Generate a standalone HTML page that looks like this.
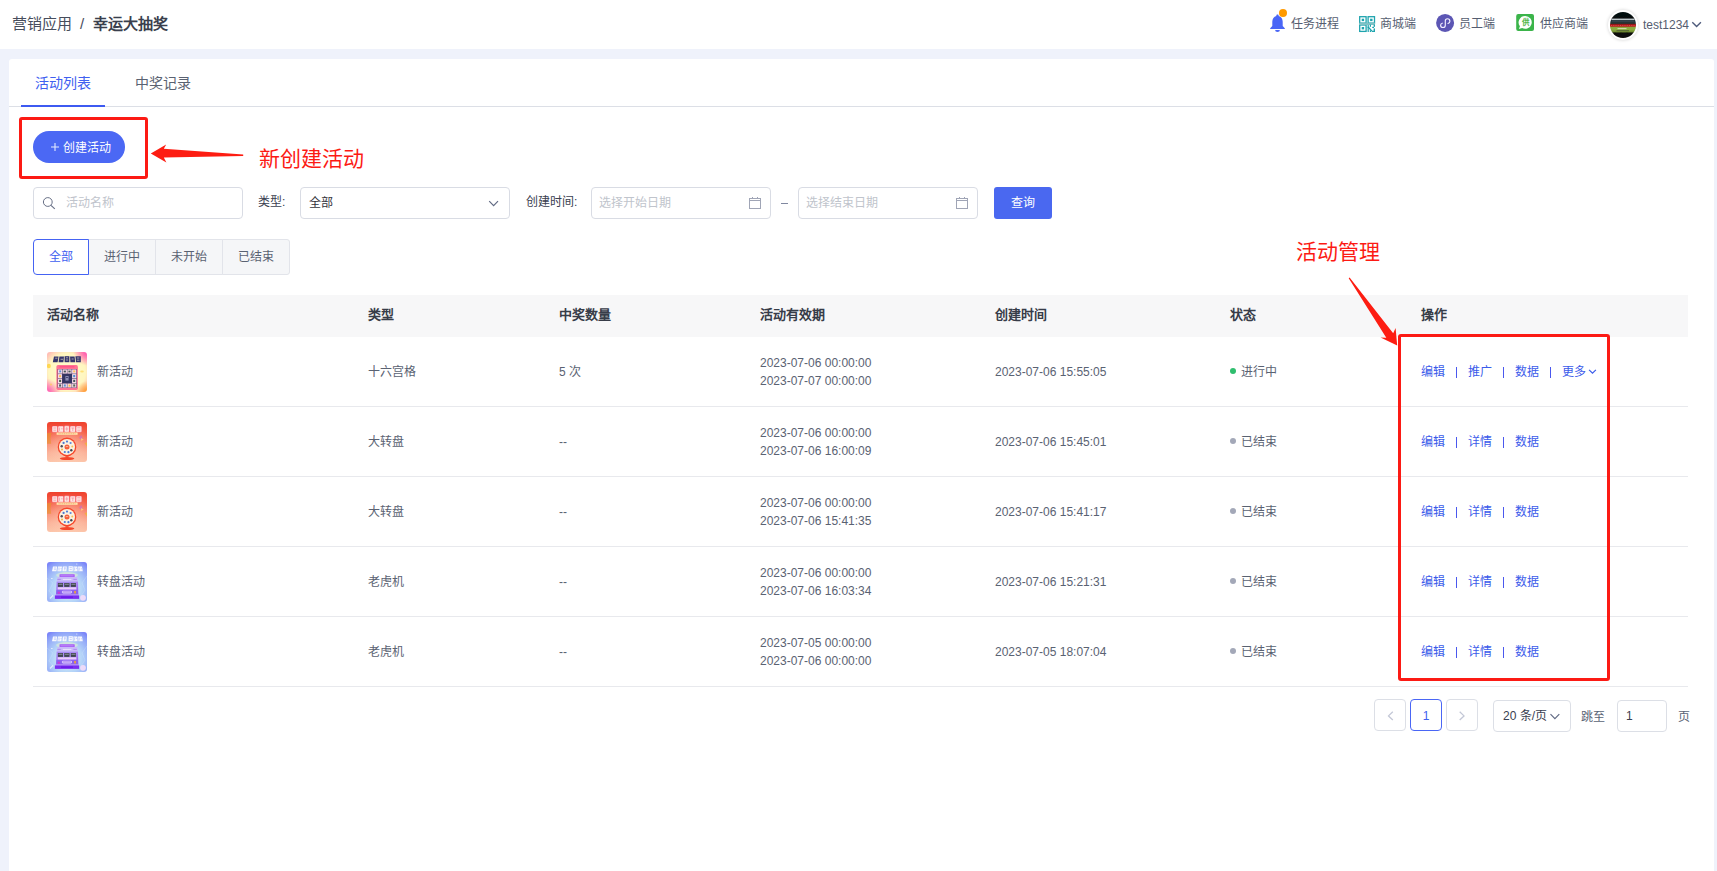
<!DOCTYPE html>
<html lang="zh-CN">
<head>
<meta charset="utf-8">
<title>幸运大抽奖</title>
<style>
*{box-sizing:border-box;margin:0;padding:0}
html,body{width:1717px;height:871px;overflow:hidden}
body{position:relative;background:#eff2fb;font-family:"Liberation Sans",sans-serif;font-size:12px;color:#5a6272;}
.abs{position:absolute}
.hdr{position:absolute;left:0;top:0;width:1717px;height:49px;background:#fff}
.crumb{position:absolute;left:12px;top:14px;font-size:15px;line-height:20px;color:#474d5c;white-space:nowrap}
.crumb b{font-weight:bold;color:#3a3f4d}
.crumb i{font-style:normal;margin:0 9px 0 8px}
.nav{position:absolute;top:14px;height:20px;line-height:20px;font-size:12px;color:#555d70;white-space:nowrap}
.card{position:absolute;left:9px;top:59px;width:1705px;height:812px;background:#fff;border-radius:3px 3px 0 0}
.tabline{position:absolute;left:9px;top:106px;width:1705px;height:1px;background:#dcdfe6}
.tab{position:absolute;top:73px;font-size:14px;line-height:20px;color:#5a6272;white-space:nowrap}
.tab.on{color:#4060f0}
.tabbar{position:absolute;left:21px;top:105px;width:84px;height:2px;background:#3d5af1}
.redbox{position:absolute;border:3px solid #fc1a14;border-radius:3px}
.note{position:absolute;color:#fc1a14;font-size:21px;line-height:28px;white-space:nowrap;font-weight:300}
.btn{position:absolute;background:#4a68f0;color:#fff;text-align:center;white-space:nowrap}
.inp{position:absolute;height:32px;border:1px solid #d9dce4;border-radius:4px;background:#fff;line-height:30px;font-size:12px;white-space:nowrap}
.ph{color:#c0c4cc}
.lbl{position:absolute;line-height:20px;font-size:12px;color:#3a4050;white-space:nowrap}
.seg{position:absolute;top:239px;height:36px;line-height:34px;text-align:center;background:#f5f6f8;border:1px solid #e2e4ea;color:#5a6272;font-size:12px}
.thead{position:absolute;left:33px;top:295px;width:1655px;height:42px;background:#f7f7f8}
.th{position:absolute;top:305px;font-size:13px;line-height:20px;font-weight:bold;color:#373c48;white-space:nowrap}
.row{position:absolute;left:33px;width:1655px;height:70px;border-bottom:1px solid #e8e9ed}
.c{position:absolute;white-space:nowrap;line-height:18px;font-size:12px;color:#5a6272}
.lk{color:#3b5bea}
.thumb{position:absolute;left:14px;top:15px;width:40px;height:40px;border-radius:3px;overflow:hidden}
.dot{display:inline-block;width:6px;height:6px;border-radius:50%;margin-right:5px;vertical-align:2px}
.pg{position:absolute;top:700px;height:32px;border:1px solid #dcdfe6;border-radius:4px;background:#fff;line-height:30px;text-align:center;font-size:12px;color:#33333b}
.sep{display:inline-block;width:1px;height:11px;background:#4a58ee;margin:0 11px;vertical-align:-2px}
.chv{margin-left:2px;vertical-align:1px}
</style>
</head>
<body>
<svg width="0" height="0" style="position:absolute">
<defs>
<radialGradient id="g1" cx="50%" cy="50%" r="70%"><stop offset="0" stop-color="#fffdd2"/><stop offset=".6" stop-color="#fff6bf"/><stop offset=".82" stop-color="#ffc4b6"/><stop offset="1" stop-color="#ff9fb2"/></radialGradient>
<linearGradient id="g2" x1="0" y1="0" x2="0" y2="1"><stop offset="0" stop-color="#ee3a26"/><stop offset=".35" stop-color="#f66a52"/><stop offset=".75" stop-color="#fbb097"/><stop offset="1" stop-color="#fdc9ad"/></linearGradient>
<radialGradient id="g3" cx="50%" cy="64%" r="82%"><stop offset="0" stop-color="#e0f6f4"/><stop offset=".42" stop-color="#b3d3f8"/><stop offset=".75" stop-color="#8c9ff8"/><stop offset="1" stop-color="#5f5cfa"/></radialGradient>
<linearGradient id="g3b" x1="0" y1="0" x2="0" y2="1"><stop offset="0" stop-color="#b08af7"/><stop offset="1" stop-color="#8a4ff0"/></linearGradient>
<filter id="bl" x="-5%" y="-5%" width="110%" height="110%"><feGaussianBlur stdDeviation="0.45"/></filter>
<radialGradient id="g1c" cx="100%" cy="0%" r="34%"><stop offset="0" stop-color="#ff4fae"/><stop offset="1" stop-color="#ff4fae" stop-opacity="0"/></radialGradient>
<radialGradient id="g1d" cx="0%" cy="100%" r="34%"><stop offset="0" stop-color="#ff5cb4"/><stop offset="1" stop-color="#ff5cb4" stop-opacity="0"/></radialGradient>
<radialGradient id="g1e" cx="100%" cy="100%" r="28%"><stop offset="0" stop-color="#ff9a1e"/><stop offset="1" stop-color="#ff9a1e" stop-opacity="0"/></radialGradient>
<radialGradient id="g2r" cx="50%" cy="62%" r="60%"><stop offset="0" stop-color="#ffd9c2" stop-opacity=".55"/><stop offset="1" stop-color="#ffd9c2" stop-opacity="0"/></radialGradient>
<g id="t1" filter="url(#bl)">
 <rect x="-2" y="-2" width="44" height="44" fill="url(#g1)"/>
 <rect width="40" height="40" fill="url(#g1c)"/><rect width="40" height="40" fill="url(#g1d)"/><rect width="40" height="40" fill="url(#g1e)"/>
 <ellipse cx="1.8" cy="14" rx="2" ry="2.2" fill="#ffd23e" opacity=".85"/>
 <ellipse cx="35" cy="19.5" rx="1.8" ry="1.1" fill="#ffd863" opacity=".8"/>
 <circle cx="4" cy="32.5" r="1" fill="#ffd24a" opacity=".7"/>
 <g fill="#34346c">
  <path d="M7 4.4h4.6l-1 5.8H5.8z"/><path d="M12.4 4.4h4.6l-.6 5.8h-4.8z"/><rect x="17.6" y="4.2" width="4.8" height="6"/><path d="M23 4.4h4.6l.6 5.8h-4.8z"/><path d="M28.4 4.2h5.4v6h-4.8z"/>
 </g>
 <g stroke="#fff7d8" stroke-width=".7" opacity=".8"><path d="M8.2 6.2h2.2M13.6 7.3h2.4M19 5.8h2M19 8h2M24.6 7h2M30 6h2.4M30 8.2h2.4"/></g>
 <rect x="9.4" y="13.1" width="21.5" height="24.8" rx="1.6" fill="#ff7393"/>
 <rect x="12.5" y="14" width="15" height="1.5" fill="#ff4d86" opacity=".8"/>
 <rect x="10.6" y="17" width="19.2" height="18.8" fill="#5a456f"/>
 <g fill="#f6dbe6">
  <rect x="11" y="17.4" width="4.2" height="4.2"/><rect x="15.7" y="17.4" width="4.2" height="4.2"/><rect x="20.4" y="17.4" width="4.2" height="4.2"/><rect x="25.1" y="17.4" width="4.2" height="4.2"/>
  <rect x="11" y="22.1" width="4.2" height="4.2"/><rect x="25.1" y="22.1" width="4.2" height="4.2"/>
  <rect x="11" y="26.8" width="4.2" height="4.2"/><rect x="25.1" y="26.8" width="4.2" height="4.2"/>
  <rect x="11" y="31.5" width="4.2" height="4"/><rect x="15.7" y="31.5" width="4.2" height="4"/><rect x="20.4" y="31.5" width="4.2" height="4"/><rect x="25.1" y="31.5" width="4.2" height="4"/>
 </g>
 <g>
  <rect x="12.2" y="18.4" width="2" height="2" fill="#5b8fd6"/><rect x="16.7" y="18.6" width="2.2" height="1.8" fill="#44565a"/><rect x="21.4" y="18.6" width="2.2" height="1.8" fill="#4a5a56"/><rect x="26.2" y="18.4" width="2" height="2" fill="#ffc25c"/>
  <rect x="12.1" y="23.2" width="2" height="2" fill="#ffc04a"/><rect x="26.2" y="23" width="2" height="2.2" fill="#4f8ed2"/>
  <rect x="12.1" y="27.8" width="2" height="2.2" fill="#4e6452"/><rect x="26.2" y="27.8" width="2" height="2.2" fill="#47575c"/>
  <rect x="12.1" y="32.4" width="2" height="2.2" fill="#4a5c5e"/><rect x="16.8" y="32.4" width="2" height="2.2" fill="#5a93d4"/><rect x="21.6" y="32.6" width="1.8" height="2" fill="#ffbd3c"/><rect x="26.2" y="32.4" width="2" height="2.2" fill="#566a58"/>
 </g>
 <rect x="15.2" y="21.9" width="9.8" height="9.2" fill="#343463"/>
 <rect x="18.4" y="24" width="3.2" height="4.6" fill="#a9a9cf" opacity=".75"/>
 <rect x="19.2" y="25" width="1.6" height="1" fill="#343463"/>
</g>
<g id="t2" filter="url(#bl)">
 <rect x="-2" y="-2" width="44" height="44" fill="url(#g2)"/>
 <rect width="40" height="40" fill="url(#g2r)"/>
 <path d="M0 11h4.4l-1 5.2l.8 5.6H0z" fill="#e7922c" opacity=".6"/>
 <path d="M37.5 21l2.5-.6v4.4z" fill="#f0b43a" opacity=".8"/>
 <path d="M32 15.5l2.4-2.6l1.4 3.6l-2.2 1z" fill="#c56ad0" opacity=".6"/><path d="M34 16l2.6 1.6l-2.4 1.4z" fill="#ffd27a" opacity=".8"/>
 <g fill="#fff5f3" stroke="#f7365a" stroke-width=".4" opacity=".9">
  <rect x="5" y="4" width="5.6" height="6.2" rx="1"/><rect x="11" y="4" width="5.6" height="6.2" rx="1"/><rect x="17.2" y="3.8" width="5.2" height="6.4" rx="1"/><rect x="23" y="4" width="5.6" height="6.2" rx="1"/><rect x="29" y="4" width="5.8" height="6.2" rx="1"/>
 </g>
 <g stroke="#f46a7c" stroke-width=".7" opacity=".75"><path d="M6.4 6h2.8M6.4 8.2h2.8M12.4 5.6v3.2M14.2 6.8h1.4M18.4 7h2.8M19.8 5v3.8M24.4 6h2.8M25.8 6v3M30.4 5.8h3M30.4 8.2h3"/></g>
 <rect x="9.6" y="10.5" width="21" height="2.3" fill="#ffe7ae"/>
 <path d="M11.5 11.7h17" stroke="#e58a55" stroke-width=".7" stroke-dasharray="1.2 .6" opacity=".8"/>
 <rect x="18.4" y="32" width="3.2" height="3.6" fill="#f55a38"/>
 <ellipse cx="20.1" cy="36.6" rx="7.3" ry="1.5" fill="#f4472a"/>
 <circle cx="20" cy="24.9" r="9.3" fill="#f6472a"/>
 <circle cx="20" cy="24.9" r="8" fill="#fbf2e0"/>
 <g>
  <circle cx="20" cy="19.6" r="1.1" fill="#4f7fd8"/><circle cx="23.6" cy="21" r="1.1" fill="#5b8bdc"/><circle cx="25.3" cy="24.4" r="1" fill="#f6c25a"/><circle cx="24.3" cy="28.2" r="1.2" fill="#3f4652"/>
  <circle cx="21.4" cy="30.2" r="1.1" fill="#4a7ad6"/><circle cx="17.8" cy="30" r="1.1" fill="#4c7cd6"/><circle cx="15" cy="27.6" r="1" fill="#f4b84a"/><circle cx="14.7" cy="24.2" r="1.2" fill="#474c58"/><circle cx="16.6" cy="20.9" r="1.1" fill="#4b78cf"/>
 </g>
 <circle cx="20" cy="24.9" r="2.5" fill="#f4603a"/>
 <path d="M18.8 24.6h2.4" stroke="#ffd9c2" stroke-width=".7"/>
</g>
<g id="t3" filter="url(#bl)">
 <rect x="-2" y="-2" width="44" height="44" fill="url(#g3)"/>
 <path d="M0 16l6 5l-4 8l5 6" stroke="#e9f3ff" stroke-width=".4" fill="none" opacity=".5"/>
 <path d="M40 14l-5 7l3 7l-4 6" stroke="#e9f3ff" stroke-width=".4" fill="none" opacity=".5"/>
 <path d="M3 36.5l3-3.2" stroke="#fff" stroke-width="1.1" opacity=".7"/>
 <circle cx="29.8" cy="2" r=".6" fill="#fff" opacity=".8"/><rect x="4" y="16" width="1.6" height=".8" fill="#fff" opacity=".8"/>
 <g fill="#fff" opacity=".92">
  <path d="M6 4.4h4.2l-.8 4.8H5z"/><path d="M11 4.4h4l-.6 4.8h-4z"/><path d="M15.8 4.4h4l-.4 4.8h-4z"/><rect x="21.6" y="4.2" width="4.2" height="5"/><path d="M26.4 4.4h4l.2 4.8h-4z"/><path d="M31 4.4h4l.8 4.8h-4.4z"/>
 </g>
 <g stroke="#8f9bf6" stroke-width=".6" opacity=".75"><path d="M7 6h2M7.2 7.6h1.6M12 5.6v3M13.6 6.6h1M17 6h2M17.8 5.4v3M22.6 5.6h2.2M22.6 7.6h2.2M27.6 5.4v3M29 6.4h1M32.2 5.6v3M33.8 6.8h1.2"/></g>
 <ellipse cx="20" cy="13" rx="11" ry="3" fill="#eaf7c8" opacity=".5"/>
 <rect x="12.5" y="12.2" width="15.2" height="3" rx=".6" fill="#a45cf5"/>
 <rect x="13.5" y="12.8" width="13" height="1.6" fill="#b779f8"/>
 <path d="M10.6 15.1h19.6l.8 4.4H9.8z" fill="#c9b9f9"/>
 <path d="M10.4 17.4h3.4M26.4 17.4h3.4" stroke="#a47af3" stroke-width=".8"/><path d="M15.8 17.4h8.6" stroke="#efe8ff" stroke-width=".9"/>
 <path d="M9.6 19.4h21.4l.4 13.8H9.2z" fill="url(#g3b)"/>
 <rect x="10.4" y="20.2" width="19.2" height="5.2" fill="#a98cf3"/>
 <rect x="10.9" y="21" width="5.1" height="3.9" fill="#3f4450"/><rect x="17.2" y="21" width="5.3" height="3.9" fill="#3f4450"/><rect x="23.8" y="21" width="5.1" height="3.9" fill="#3f4450"/>
 <path d="M11.4 22.2h4.1M17.8 22.2h4.1M24.4 22.2h4.1" stroke="#8d949c" stroke-width="1.1"/>
 <rect x="10.6" y="25.3" width="18.8" height="2.2" fill="#ead0f9"/>
 <rect x="9.4" y="28.2" width="21.6" height="4.2" fill="#8a63ef"/>
 <rect x="14.8" y="28.8" width="10.2" height="2.6" rx="1.3" fill="#e3d4fc"/>
 <rect x="15.6" y="29.4" width="8.4" height="1.1" fill="#8d56ee" opacity=".7"/>
 <rect x="10.8" y="29.8" width="2" height="1.8" fill="#d733d2"/><rect x="27.2" y="28.9" width="1.7" height="2.6" fill="#f0a13a"/>
 <rect x="8.4" y="32.4" width="23.2" height="1.2" fill="#c4a5f8"/>
 <rect x="7.9" y="33.4" width="24.2" height="3.5" fill="#7a2ff0"/>
 <rect x="14" y="34.4" width="12" height="1.6" fill="#6a1fe8"/>
 <circle cx="36" cy="35.8" r="2.9" fill="#f5ddf8" opacity=".9"/>
</g>
</defs>
</svg>
<div class="hdr">
  <div class="crumb">营销应用<i>/</i><b>幸运大抽奖</b></div>
  <div class="nav" style="left:1291px">任务进程</div>
  <div class="nav" style="left:1380px">商城端</div>
  <div class="nav" style="left:1459px">员工端</div>
  <div class="nav" style="left:1540px">供应商端</div>
  <div class="nav" style="left:1643px;top:15px">test1234</div>
</div>
<div class="card"></div>
<div class="tab on" style="left:35px">活动列表</div>
<div class="tab" style="left:135px">中奖记录</div>
<div class="tabline"></div>
<div class="tabbar"></div>

<div class="redbox" style="left:19px;top:117px;width:129px;height:62px"></div>
<div class="btn" style="left:33px;top:131px;width:92px;height:32px;border-radius:16px;line-height:32px;font-size:12px;background:#4b68f4"><span style="position:absolute;left:30px;top:1px">创建活动</span></div>
<div class="note" style="left:259px;top:145px">新创建活动</div>

<div class="inp" style="left:33px;top:187px;width:210px;padding-left:32px"><span class="ph">活动名称</span></div>
<div class="lbl" style="left:258px;top:192px">类型:</div>
<div class="inp" style="left:300px;top:187px;width:210px;padding-left:8px;color:#33333b">全部</div>
<div class="lbl" style="left:526px;top:192px">创建时间:</div>
<div class="inp" style="left:591px;top:187px;width:180px;padding-left:7px"><span class="ph">选择开始日期</span></div>
<div class="abs" style="left:781px;top:203px;width:7px;height:1px;background:#8088a0"></div>
<div class="inp" style="left:798px;top:187px;width:180px;padding-left:7px"><span class="ph">选择结束日期</span></div>
<div class="btn" style="left:994px;top:187px;width:58px;height:32px;border-radius:3px;line-height:32px;font-size:12px">查询</div>

<div class="seg" style="left:33px;width:56px;background:#fff;border-color:#4563f3;color:#4060f0;border-radius:4px 0 0 4px;z-index:2">全部</div>
<div class="seg" style="left:88px;width:68px">进行中</div>
<div class="seg" style="left:155px;width:68px">未开始</div>
<div class="seg" style="left:222px;width:68px;border-radius:0 3px 3px 0">已结束</div>

<div class="note" style="left:1296px;top:238px">活动管理</div>

<div class="thead"></div>
<div class="th" style="left:47px">活动名称</div>
<div class="th" style="left:368px">类型</div>
<div class="th" style="left:559px">中奖数量</div>
<div class="th" style="left:760px">活动有效期</div>
<div class="th" style="left:995px">创建时间</div>
<div class="th" style="left:1230px">状态</div>
<div class="th" style="left:1421px">操作</div>

<!--ROWS_START-->
<div class="row" style="top:337px">
<svg class="thumb" viewBox="0 0 40 40"><use href="#t1"/></svg>
<div class="c" style="left:64px;top:26px">新活动</div>
<div class="c" style="left:335px;top:26px">十六宫格</div>
<div class="c" style="left:526px;top:26px">5 次</div>
<div class="c" style="left:727px;top:17px">2023-07-06 00:00:00<br>2023-07-07 00:00:00</div>
<div class="c" style="left:962px;top:26px">2023-07-06 15:55:05</div>
<div class="c" style="left:1197px;top:26px"><span class="dot" style="background:#2fbe6e"></span>进行中</div>
<div class="c lk" style="left:1388px;top:26px">编辑<span class="sep"></span>推广<span class="sep"></span>数据<span class="sep"></span>更多<svg class="chv" width="9" height="6" viewBox="0 0 9 6"><path d="M1.1 0.9 L4.5 4.2 L7.9 0.9" fill="none" stroke="#3b5bea" stroke-width="1.2"/></svg></div>
</div>
<div class="row" style="top:407px">
<svg class="thumb" viewBox="0 0 40 40"><use href="#t2"/></svg>
<div class="c" style="left:64px;top:26px">新活动</div>
<div class="c" style="left:335px;top:26px">大转盘</div>
<div class="c" style="left:526px;top:26px">--</div>
<div class="c" style="left:727px;top:17px">2023-07-06 00:00:00<br>2023-07-06 16:00:09</div>
<div class="c" style="left:962px;top:26px">2023-07-06 15:45:01</div>
<div class="c" style="left:1197px;top:26px"><span class="dot" style="background:#a3a8b8"></span>已结束</div>
<div class="c lk" style="left:1388px;top:26px">编辑<span class="sep"></span>详情<span class="sep"></span>数据</div>
</div>
<div class="row" style="top:477px">
<svg class="thumb" viewBox="0 0 40 40"><use href="#t2"/></svg>
<div class="c" style="left:64px;top:26px">新活动</div>
<div class="c" style="left:335px;top:26px">大转盘</div>
<div class="c" style="left:526px;top:26px">--</div>
<div class="c" style="left:727px;top:17px">2023-07-06 00:00:00<br>2023-07-06 15:41:35</div>
<div class="c" style="left:962px;top:26px">2023-07-06 15:41:17</div>
<div class="c" style="left:1197px;top:26px"><span class="dot" style="background:#a3a8b8"></span>已结束</div>
<div class="c lk" style="left:1388px;top:26px">编辑<span class="sep"></span>详情<span class="sep"></span>数据</div>
</div>
<div class="row" style="top:547px">
<svg class="thumb" viewBox="0 0 40 40"><use href="#t3"/></svg>
<div class="c" style="left:64px;top:26px">转盘活动</div>
<div class="c" style="left:335px;top:26px">老虎机</div>
<div class="c" style="left:526px;top:26px">--</div>
<div class="c" style="left:727px;top:17px">2023-07-06 00:00:00<br>2023-07-06 16:03:34</div>
<div class="c" style="left:962px;top:26px">2023-07-06 15:21:31</div>
<div class="c" style="left:1197px;top:26px"><span class="dot" style="background:#a3a8b8"></span>已结束</div>
<div class="c lk" style="left:1388px;top:26px">编辑<span class="sep"></span>详情<span class="sep"></span>数据</div>
</div>
<div class="row" style="top:617px">
<svg class="thumb" viewBox="0 0 40 40"><use href="#t3"/></svg>
<div class="c" style="left:64px;top:26px">转盘活动</div>
<div class="c" style="left:335px;top:26px">老虎机</div>
<div class="c" style="left:526px;top:26px">--</div>
<div class="c" style="left:727px;top:17px">2023-07-05 00:00:00<br>2023-07-06 00:00:00</div>
<div class="c" style="left:962px;top:26px">2023-07-05 18:07:04</div>
<div class="c" style="left:1197px;top:26px"><span class="dot" style="background:#a3a8b8"></span>已结束</div>
<div class="c lk" style="left:1388px;top:26px">编辑<span class="sep"></span>详情<span class="sep"></span>数据</div>
</div>
<!--ROWS_END-->

<div class="redbox" style="left:1398px;top:334px;width:212px;height:347px"></div>

<div class="pg" style="left:1374px;top:699px;width:32px"></div>
<div class="pg" style="left:1410px;top:699px;width:32px;border-color:#4a66f5;color:#4060f0;line-height:32px">1</div>
<div class="pg" style="left:1446px;top:699px;width:32px"></div>
<div class="pg" style="left:1493px;width:78px;text-align:left;padding-left:9px;color:#3a4050">20 条/页</div>
<div class="lbl" style="left:1581px;top:707px;color:#5a6375">跳至</div>
<div class="pg" style="left:1617px;width:50px;text-align:left;padding-left:8px;color:#3a4050">1</div>
<div class="lbl" style="left:1678px;top:707px;color:#5a6375">页</div>
<svg class="abs" style="left:0;top:0;z-index:5;pointer-events:none" width="1717" height="871" viewBox="0 0 1717 871">
<defs><clipPath id="avc"><circle cx="1623" cy="25" r="13"/></clipPath>
<filter id="sh" x="-30%" y="-30%" width="160%" height="160%"><feGaussianBlur stdDeviation="1.6"/></filter>
<linearGradient id="avg" gradientUnits="userSpaceOnUse" x1="0" y1="12" x2="0" y2="38">
<stop offset="0" stop-color="#040707"/><stop offset=".22" stop-color="#070b0c"/><stop offset=".27" stop-color="#1c2a2e"/><stop offset=".36" stop-color="#25363b"/><stop offset=".44" stop-color="#2a3230"/>
<stop offset=".47" stop-color="#7c1216"/><stop offset=".5" stop-color="#c4151b"/><stop offset=".55" stop-color="#b8141a"/><stop offset=".575" stop-color="#8aa83e"/><stop offset=".68" stop-color="#8cab40"/><stop offset=".77" stop-color="#6d8a30"/><stop offset=".8" stop-color="#15180c"/><stop offset="1" stop-color="#080806"/>
</linearGradient></defs>
<!-- bell -->
<path d="M1277.5 14.6c-.7 0-1.2.5-1.2 1.2v.3c-2.4.7-4 2.9-4 5.6v4.2l-2.1 2.3v.7h14.6v-.7l-2.1-2.3v-4.2c0-2.7-1.6-4.9-4-5.6v-.3c0-.7-.5-1.2-1.2-1.2z" fill="#4a66f6"/>
<path d="M1275.1 30h4.8a2.4 2.1 0 0 1-4.8 0z" fill="#4a66f6"/>
<circle cx="1283" cy="13" r="4" fill="#ff9a00"/>
<!-- qr -->
<g fill="none" stroke="#1ea4ae" stroke-width="1.3">
<rect x="1359.7" y="16.7" width="6.4" height="6.4"/><rect x="1368.1" y="16.7" width="6.4" height="6.4"/><rect x="1359.7" y="25" width="6.4" height="6.4"/>
</g>
<g fill="#1ea4ae">
<rect x="1361.7" y="18.7" width="2.4" height="2.4"/><rect x="1370.1" y="18.7" width="2.4" height="2.4"/><rect x="1361.7" y="27" width="2.4" height="2.4"/>
<rect x="1359.2" y="22.7" width="15.8" height="2.3" fill="#7fc1c5"/>
<rect x="1367.6" y="25" width="1.2" height="7"/><rect x="1369.8" y="24.6" width="1.2" height="2.2"/><rect x="1373.6" y="24.6" width="1.4" height="2.2"/>
<rect x="1367.6" y="26.8" width="1.8" height="1.2"/><rect x="1372.2" y="26.8" width="1.8" height="1.2"/>
<path d="M1369.6 27.6l3.2 3.6h-1.8l-2.2-2.6z"/>
<rect x="1373.6" y="28.4" width="1.4" height="3.6"/><rect x="1371.8" y="30.8" width="3.2" height="1.2"/><rect x="1369.8" y="30.4" width="1.2" height="1.6"/>
</g>
<!-- mini program -->
<circle cx="1445.1" cy="22.9" r="9" fill="#5c56b4"/>
<path d="M1448 23.5C1449.3 23 1449.9 22.2 1449.9 21.2C1449.9 19.8 1448.8 18.7 1447.4 18.7C1446.2 18.7 1445.3 19.6 1445.3 20.9L1445.3 25.2C1445.3 26.5 1444.3 27.5 1443 27.5C1441.6 27.5 1440.6 26.5 1440.6 25.2C1440.6 24.2 1441.3 23.5 1442.3 23.2" fill="none" stroke="#f3f0ff" stroke-width="1.15" stroke-linecap="round"/>
<!-- supplier -->
<rect x="1516.2" y="13.9" width="17.8" height="17" rx="2" fill="#3bb44a"/>
<path d="M1525.3 16a6.5 6.4 0 1 1 -3.2 12l-3.2 .9l1-2.7a6.5 6.4 0 0 1 5.4 -10.2z" fill="#fff"/>
<text x="1525.2" y="25.4" font-size="7.5" font-weight="bold" text-anchor="middle" fill="#52b74c" font-family="Liberation Sans, sans-serif">供</text>
<!-- avatar -->
<circle cx="1623" cy="25" r="15.5" fill="#000" opacity=".13" filter="url(#sh)"/>
<circle cx="1623" cy="25" r="15" fill="#fff"/>
<g clip-path="url(#avc)"><g filter="url(#bl)">
<rect x="1608" y="10" width="30" height="30" fill="url(#avg)"/>
<rect x="1611.5" y="18.7" width="23" height="1.1" fill="#e4ecee"/>
<rect x="1612" y="20.4" width="22" height="1.2" fill="#3d5158" opacity=".8"/>
<path d="M1611 25.4h24" stroke="#e8b9b4" stroke-width=".5" stroke-dasharray="1 .8" opacity=".7"/>
<rect x="1617.5" y="28.2" width="9" height=".9" fill="#e3ead2" opacity=".9"/><rect x="1616.5" y="30.2" width="12.5" height="1" fill="#4d5a34" opacity=".9"/>
<path d="M1612 33.6l3-.8l3 .9l3-1l3 .9l3-.9l3 1l3-.6v4h-22z" fill="#0a0a07"/>
</g></g>
<!-- user chevron -->
<path d="M1692.3 22.3l4.3 4.2l4.3-4.2" fill="none" stroke="#4e5b7c" stroke-width="1.4"/>
<!-- arrows -->
<path d="M150.8 153.4L166.2 144.5L163.8 148.7L243.2 154.6L243.2 155.9L163.8 157.4L166.4 162.5Z" fill="#fd1d12"/>
<path d="M1348.7 278.3L1349.6 277.6L1393.2 333.2L1395.6 328L1397.2 345.6L1380.6 337.6L1386.3 337.8Z" fill="#fd1d12"/>
<path d="M51 147h8M55 143v8" stroke="#e4e9fe" stroke-width="1.1" fill="none"/>
<path d="M1392.8 711.8l-4.3 4.1l4.3 4.1M1459.7 711.8l4.3 4.1l-4.3 4.1" fill="none" stroke="#c3c7d6" stroke-width="1.3"/>
<path d="M1550.5 714.2l4.4 4.4l4.4-4.4" fill="none" stroke="#626b84" stroke-width="1.2"/>
<!-- search icon -->
<circle cx="47.8" cy="202" r="4.4" fill="none" stroke="#687086" stroke-width="1"/>
<path d="M51 205.3l3.8 3.5" stroke="#687086" stroke-width="1.15" fill="none"/>
<!-- select chevron -->
<path d="M489.2 201.2l4.4 4.4l4.4-4.4" fill="none" stroke="#626b84" stroke-width="1.2"/>
<!-- calendars -->
<g fill="none" stroke="#a0a5b6" stroke-width="1">
<rect x="749.5" y="198.5" width="11" height="10"/><path d="M749.5 200.5h11M752.5 197v2M757.5 197v2"/>
<rect x="956.5" y="198.5" width="11" height="10"/><path d="M956.5 200.5h11M959.5 197v2M964.5 197v2"/>
</g>
</svg>
</body>
</html>
